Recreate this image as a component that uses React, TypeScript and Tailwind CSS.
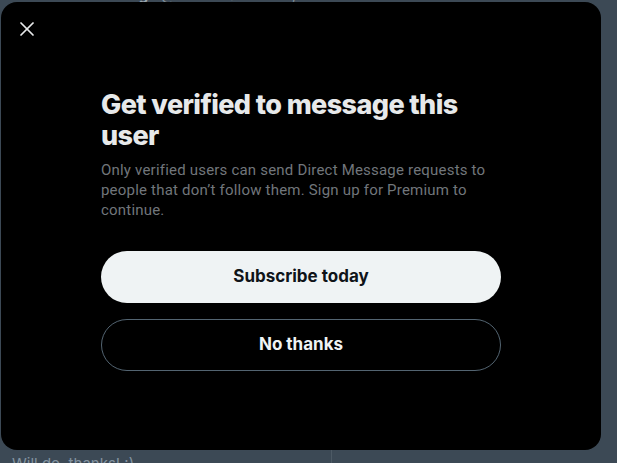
import { X } from "lucide-react";

export default function App() {
  return (
    <div className="relative h-[463px] w-[617px] overflow-hidden bg-[#3c4955] font-['Inter',sans-serif]">
      {/* page behind the overlay */}
      <div className="flex h-full flex-col justify-between">
        <div className="-mt-[13px] flex items-center gap-1 pl-[45px] text-[15px] leading-[16px]">
          <span className="font-bold text-[#9aa5ad]">Soundbar Saga</span>
          <span className="text-[#7f8d98]">@soundbar · Feb 1, 2024</span>
        </div>
        <div className="flex h-[13px] w-full">
          <div className="w-[332px] border-r border-[#4d5a65] pl-3 pt-[6px] text-[15px] leading-[16px] text-[#8393a0]">
            Will do, thanks! :)
          </div>
        </div>
      </div>

      {/* modal */}
      <div className="absolute left-[1px] top-[2px] flex h-[448px] w-[600px] flex-col rounded-2xl bg-black">
        <div className="px-[14px] pt-[15px]">
          <button
            type="button"
            aria-label="Close"
            className="grid size-6 place-items-center text-[#e7e9ea]"
          >
            <X className="size-6" strokeWidth={1.75} />
          </button>
        </div>

        <div className="mx-auto mt-[48px] flex w-[400px] flex-col">
          <h1 className="text-[27px] font-extrabold leading-[31px] tracking-[-0.6px] text-[#e7e9ea]">
            Get verified to message this user
          </h1>
          <p className="mt-[9px] font-['Roboto',sans-serif] text-[15px] leading-[20px] tracking-[0.2px] text-[#71767b]">
            Only verified users can send Direct Message requests to people that
            don’t follow them. Sign up for Premium to continue.
          </p>

          <div className="mt-[31px] flex flex-col gap-4">
            <button
              type="button"
              className="h-[52px] rounded-full bg-[#eff3f4] text-[17px] font-bold text-[#0f1419]"
            >
              Subscribe today
            </button>
            <button
              type="button"
              className="h-[52px] rounded-full border border-[#536471] text-[17px] font-bold text-[#eff3f4]"
            >
              No thanks
            </button>
          </div>
        </div>
      </div>
    </div>
  );
}
